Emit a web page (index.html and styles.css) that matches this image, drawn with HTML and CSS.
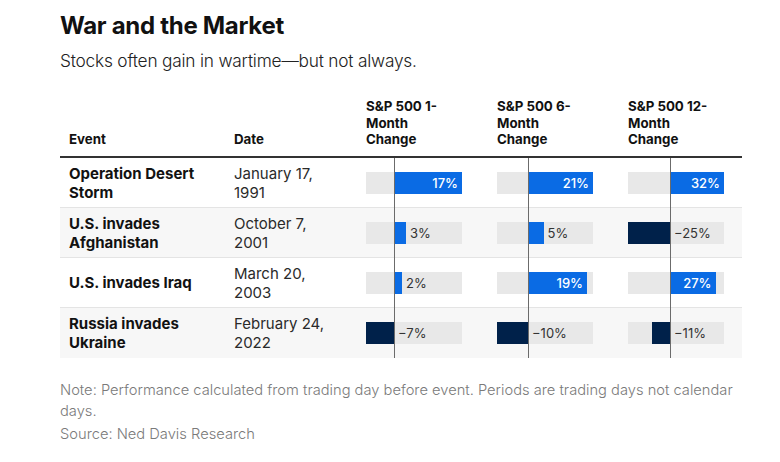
FILE: index.html
```html
<!DOCTYPE html>
<html lang="en">
<head>
<meta charset="utf-8">
<title>War and the Market</title>
<link rel="stylesheet" href="styles.css">
</head>
<body>
<main class="chart">
  <h1 class="title">War and the Market</h1>
  <p class="subtitle">Stocks often gain in wartime—but not always.</p>

  <div class="table">
    <div class="row head">
      <div class="cell">Event</div>
      <div class="cell">Date</div>
      <div class="cell">S&amp;P 500 1-<br>Month<br>Change</div>
      <div class="cell">S&amp;P 500 6-<br>Month<br>Change</div>
      <div class="cell">S&amp;P 500 12-<br>Month<br>Change</div>
    </div>

    <div class="row">
      <div class="cell event">Operation Desert<br>Storm</div>
      <div class="cell date">January 17,<br>1991</div>
      <div class="cell bar-cell c1"><div class="track"><div class="neg"></div><div class="pos"><div class="bar up" style="width:68px"><span class="in">17%</span></div></div></div></div>
      <div class="cell bar-cell c2"><div class="track"><div class="neg"></div><div class="pos"><div class="bar up" style="width:65px"><span class="in">21%</span></div></div></div></div>
      <div class="cell bar-cell c3"><div class="track"><div class="neg"></div><div class="pos"><div class="bar up" style="width:54px"><span class="in">32%</span></div></div></div></div>
    </div>

    <div class="row alt">
      <div class="cell event">U.S. invades<br>Afghanistan</div>
      <div class="cell date">October 7,<br>2001</div>
      <div class="cell bar-cell c1"><div class="track"><div class="neg"></div><div class="pos"><div class="bar up" style="width:12px"></div><span class="out">3%</span></div></div></div>
      <div class="cell bar-cell c2"><div class="track"><div class="neg"></div><div class="pos"><div class="bar up" style="width:15.5px"></div><span class="out">5%</span></div></div></div>
      <div class="cell bar-cell c3"><div class="track"><div class="neg"><div class="bar down" style="width:42px"></div></div><div class="pos"><span class="out">−25%</span></div></div></div>
    </div>

    <div class="row">
      <div class="cell event">U.S. invades Iraq</div>
      <div class="cell date">March 20,<br>2003</div>
      <div class="cell bar-cell c1"><div class="track"><div class="neg"></div><div class="pos"><div class="bar up" style="width:8px"></div><span class="out">2%</span></div></div></div>
      <div class="cell bar-cell c2"><div class="track"><div class="neg"></div><div class="pos"><div class="bar up" style="width:59px"><span class="in">19%</span></div></div></div></div>
      <div class="cell bar-cell c3"><div class="track"><div class="neg"></div><div class="pos"><div class="bar up" style="width:45.5px"><span class="in">27%</span></div></div></div></div>
    </div>

    <div class="row alt">
      <div class="cell event">Russia invades<br>Ukraine</div>
      <div class="cell date">February 24,<br>2022</div>
      <div class="cell bar-cell c1"><div class="track"><div class="neg"><div class="bar down" style="width:28px"></div></div><div class="pos"><span class="out">−7%</span></div></div></div>
      <div class="cell bar-cell c2"><div class="track"><div class="neg"><div class="bar down" style="width:31px"></div></div><div class="pos"><span class="out">−10%</span></div></div></div>
      <div class="cell bar-cell c3"><div class="track"><div class="neg"><div class="bar down" style="width:18.5px"></div></div><div class="pos"><span class="out">−11%</span></div></div></div>
    </div>
  </div>

  <p class="note">Note: Performance calculated from trading day before event. Periods are trading days not calendar days.</p>
  <p class="source">Source: Ned Davis Research</p>
</main>
</body>
</html>
```

FILE: styles.css
```css
* { box-sizing: border-box; }

html, body {
  margin: 0;
  padding: 0;
  background: #ffffff;
}

body {
  font-family: Inter, "Liberation Sans", sans-serif;
  color: #121212;
}

.chart {
  width: 682px;
  margin-left: 60px;
  padding-top: 12px;
}

.title {
  margin: 0;
  font-size: 24px;
  line-height: 28px;
  font-weight: 700;
  letter-spacing: -0.3px;
  color: #111;
}

.subtitle {
  margin: 10px 0 0;
  font-size: 17.3px;
  line-height: 22px;
  font-weight: 300;
  letter-spacing: -0.2px;
  color: #222;
}

.table {
  margin-top: 26px;
}

.row {
  display: grid;
  grid-template-columns: 165px 132px 131px 131px 123px;
  height: 50px;
  border-bottom: 1px solid #e4e4e4;
}

.row:last-child { border-bottom: none; }

.row.alt { background: #f7f7f7; }

.row.head {
  height: auto;
  border-bottom: 2px solid #333;
  font-size: 13.3px;
  line-height: 16.5px;
  font-weight: 700;
  color: #111;
}

.head .cell {
  padding: 0 0 8.5px 9px;
  display: flex;
  align-items: flex-end;
}

.cell {
  padding-left: 9px;
  display: flex;
  align-items: center;
  position: relative;
}

.event {
  font-size: 15px;
  line-height: 19px;
  font-weight: 700;
}

.date {
  font-size: 15px;
  line-height: 19px;
  font-weight: 400;
  color: #2a2a2a;
}

.c1 { --zero: 28px; }
.c2 { --zero: 31px; }
.c3 { --zero: 42px; }

.bar-cell::after {
  content: "";
  position: absolute;
  top: 0;
  bottom: -1px;
  left: calc(9px + var(--zero));
  width: 1px;
  background: #6b6b6b;
  z-index: 2;
}

.row:last-child .bar-cell::after { bottom: 0; }

.track {
  width: 96px;
  height: 22px;
  background: #e8e8e8;
  display: flex;
}

.neg {
  width: var(--zero);
  display: flex;
  justify-content: flex-end;
}

.pos {
  flex: 1;
  display: flex;
  align-items: center;
}

.bar {
  height: 22px;
  flex: none;
}

.bar.up {
  background: #0a6be4;
  display: flex;
  align-items: center;
  justify-content: flex-end;
}

.bar.down { background: #00214a; }

.in {
  color: #fff;
  font-size: 13px;
  font-weight: 500;
  padding-right: 4px;
}

.out {
  color: #333;
  font-size: 13px;
  font-weight: 400;
  padding-left: 4px;
}

.note {
  margin: 22px 0 0;
  font-size: 14.7px;
  line-height: 21px;
  font-weight: 300;
  color: #7a7a7a;
}

.source {
  margin: 2px 0 0;
  font-size: 14.7px;
  line-height: 21px;
  font-weight: 300;
  color: #7a7a7a;
}
```
